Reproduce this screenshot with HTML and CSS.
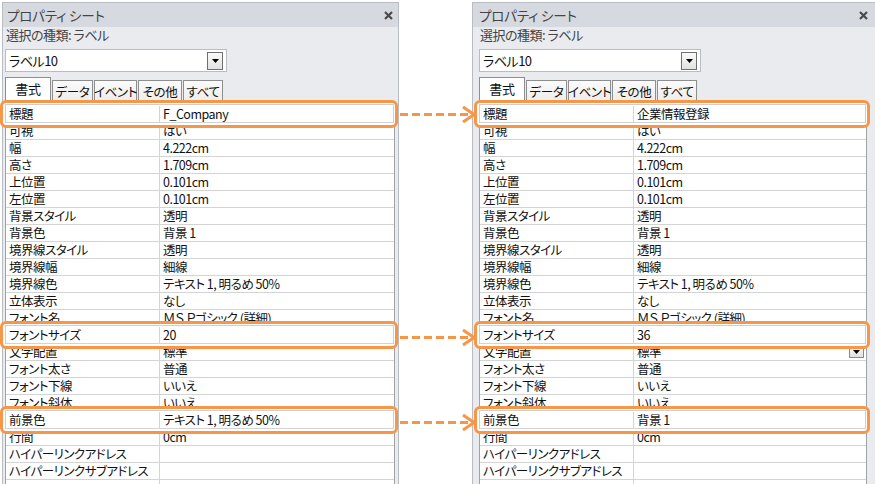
FILE: index.html
```html
<!DOCTYPE html>
<html lang="ja">
<head>
<meta charset="utf-8">
<title>プロパティ シート</title>
<link rel="stylesheet" href="styles.css">
</head>
<body>
<div class="stage">
  <section class="panel panel-left">
    <div class="titlebar"><span class="title">プロパティ シート</span>
      <svg class="close" width="9" height="9" viewBox="0 0 9 9"><path d="M1 1L8 8M8 1L1 8" stroke="#4a4a4a" stroke-width="2.2"/></svg>
    </div>
    <div class="kind">選択の種類: ラベル</div>
    <div class="combo"><span class="combo-text">ラベル10</span><span class="drop"><svg width="7" height="4" viewBox="0 0 7 4"><path d="M0 0H7L3.5 4Z" fill="#000"/></svg></span></div>
    <div class="tabs">
      <div class="tab active w1">書式</div>
      <div class="tab w2">データ</div>
      <div class="tab w3">イベント</div>
      <div class="tab w4">その他</div>
      <div class="tab w5">すべて</div>
    </div>
    <div class="grid">
      <div class="row hl"><div class="name">標題</div><div class="val">F_Company</div></div>
      <div class="row"><div class="name">可視</div><div class="val">はい</div></div>
      <div class="row"><div class="name">幅</div><div class="val">4.222cm</div></div>
      <div class="row"><div class="name">高さ</div><div class="val">1.709cm</div></div>
      <div class="row"><div class="name">上位置</div><div class="val">0.101cm</div></div>
      <div class="row"><div class="name">左位置</div><div class="val">0.101cm</div></div>
      <div class="row"><div class="name">背景スタイル</div><div class="val">透明</div></div>
      <div class="row"><div class="name">背景色</div><div class="val">背景 1</div></div>
      <div class="row"><div class="name">境界線スタイル</div><div class="val">透明</div></div>
      <div class="row"><div class="name">境界線幅</div><div class="val">細線</div></div>
      <div class="row"><div class="name">境界線色</div><div class="val">テキスト 1, 明るめ 50%</div></div>
      <div class="row"><div class="name">立体表示</div><div class="val">なし</div></div>
      <div class="row"><div class="name">フォント名</div><div class="val">ＭＳ Ｐゴシック (詳細)</div></div>
      <div class="row hl"><div class="name">フォントサイズ</div><div class="val">20</div></div>
      <div class="row"><div class="name">文字配置</div><div class="val">標準</div></div>
      <div class="row"><div class="name">フォント太さ</div><div class="val">普通</div></div>
      <div class="row"><div class="name">フォント下線</div><div class="val">いいえ</div></div>
      <div class="row"><div class="name">フォント斜体</div><div class="val">いいえ</div></div>
      <div class="row hl"><div class="name">前景色</div><div class="val">テキスト 1, 明るめ 50%</div></div>
      <div class="row"><div class="name">行間</div><div class="val">0cm</div></div>
      <div class="row"><div class="name">ハイパーリンクアドレス</div><div class="val"></div></div>
      <div class="row"><div class="name">ハイパーリンクサブアドレス</div><div class="val"></div></div>
      <div class="row"><div class="name"></div><div class="val"></div></div>
    </div>
  </section>

  <section class="panel panel-right">
    <div class="titlebar"><span class="title">プロパティ シート</span>
      <svg class="close" width="9" height="9" viewBox="0 0 9 9"><path d="M1 1L8 8M8 1L1 8" stroke="#4a4a4a" stroke-width="2.2"/></svg>
    </div>
    <div class="kind">選択の種類: ラベル</div>
    <div class="combo"><span class="combo-text">ラベル10</span><span class="drop"><svg width="7" height="4" viewBox="0 0 7 4"><path d="M0 0H7L3.5 4Z" fill="#000"/></svg></span></div>
    <div class="tabs">
      <div class="tab active w1">書式</div>
      <div class="tab w2">データ</div>
      <div class="tab w3">イベント</div>
      <div class="tab w4">その他</div>
      <div class="tab w5">すべて</div>
    </div>
    <div class="grid">
      <div class="row hl"><div class="name">標題</div><div class="val">企業情報登録</div></div>
      <div class="row"><div class="name">可視</div><div class="val">はい</div></div>
      <div class="row"><div class="name">幅</div><div class="val">4.222cm</div></div>
      <div class="row"><div class="name">高さ</div><div class="val">1.709cm</div></div>
      <div class="row"><div class="name">上位置</div><div class="val">0.101cm</div></div>
      <div class="row"><div class="name">左位置</div><div class="val">0.101cm</div></div>
      <div class="row"><div class="name">背景スタイル</div><div class="val">透明</div></div>
      <div class="row"><div class="name">背景色</div><div class="val">背景 1</div></div>
      <div class="row"><div class="name">境界線スタイル</div><div class="val">透明</div></div>
      <div class="row"><div class="name">境界線幅</div><div class="val">細線</div></div>
      <div class="row"><div class="name">境界線色</div><div class="val">テキスト 1, 明るめ 50%</div></div>
      <div class="row"><div class="name">立体表示</div><div class="val">なし</div></div>
      <div class="row"><div class="name">フォント名</div><div class="val">ＭＳ Ｐゴシック (詳細)</div></div>
      <div class="row hl"><div class="name">フォントサイズ</div><div class="val">36</div></div>
      <div class="row"><div class="name">文字配置</div><div class="val">標準<span class="cell-drop"><svg width="7" height="4" viewBox="0 0 7 4"><path d="M0 0H7L3.5 4Z" fill="#000"/></svg></span></div></div>
      <div class="row"><div class="name">フォント太さ</div><div class="val">普通</div></div>
      <div class="row"><div class="name">フォント下線</div><div class="val">いいえ</div></div>
      <div class="row"><div class="name">フォント斜体</div><div class="val">いいえ</div></div>
      <div class="row hl"><div class="name">前景色</div><div class="val">背景 1</div></div>
      <div class="row"><div class="name">行間</div><div class="val">0cm</div></div>
      <div class="row"><div class="name">ハイパーリンクアドレス</div><div class="val"></div></div>
      <div class="row"><div class="name">ハイパーリンクサブアドレス</div><div class="val"></div></div>
      <div class="row"><div class="name"></div><div class="val"></div></div>
    </div>
  </section>

  <svg class="arrows" width="80" height="484" viewBox="396 0 80 484">
    <g fill="none" stroke="#f79646" stroke-width="3">
      <path d="M400 114.5H470" stroke-dasharray="8 4"/>
      <path d="M463 107L474 114.5L463 122"/>
      <path d="M400 337.5H470" stroke-dasharray="8 4"/>
      <path d="M463 330L474 337.5L463 345"/>
      <path d="M400 422.5H470" stroke-dasharray="8 4"/>
      <path d="M463 415L474 422.5L463 430"/>
    </g>
  </svg>
</div>
</body>
</html>
```

FILE: styles.css
```css
* { box-sizing: border-box; }
html, body { margin: 0; padding: 0; }
body {
  width: 875px;
  height: 484px;
  overflow: hidden;
  background: #fff;
  font-family: "Noto Sans CJK JP", "Noto Sans", sans-serif;
  font-feature-settings: "palt";
  font-size: 12.5px;
  letter-spacing: -0.5px;
  color: #111;
}
.stage {
  position: relative;
  display: flex;
  align-items: flex-start;
  height: 484px;
  overflow: hidden;
}
.panel {
  margin-top: 2px;
  height: 520px;
  background: #e9ebef;
  border: 1px solid #b8bdc4;
  border-bottom: none;
  display: flex;
  flex-direction: column;
  flex-shrink: 0;
}
.panel > * { flex-shrink: 0; }
.panel-left {
  margin-left: 2px;
  width: 397px;
  padding: 0 3px 0 2px;
}
.panel-right {
  margin-left: 73px;
  width: 404px;
  padding: 0 8px 0 6px;
}
.titlebar {
  height: 24px;
  background: #d6dae0;
  display: flex;
  align-items: center;
  justify-content: space-between;
  line-height: 16px;
}
.panel-left .titlebar { margin: 0 -3px 0 -2px; padding-left: 4px; padding-right: 5px; }
.panel-right .titlebar { margin: 0 -8px 0 -6px; padding-left: 6px; padding-right: 7px; }
.title { color: #444; font-size: 13.5px; letter-spacing: -0.2px; }
.close { display: block; }
.kind {
  height: 13px;
  line-height: 13px;
  color: #444;
  padding-left: 1px;
  margin-top: 1px;
  font-size: 13px;
}
.combo {
  margin-top: 8px;
  height: 23px;
  width: 222px;
  background: #fff;
  border: 1px solid #b9bcc2;
  display: flex;
  align-items: center;
  justify-content: space-between;
  padding: 0 3px 0 3px;
  font-size: 13px;
}
.combo-text { color: #111; }
.drop {
  width: 16px;
  height: 18px;
  border: 1px solid #6f6f6f;
  background: linear-gradient(#fafafa, #e2e2e2);
  display: flex;
  align-items: center;
  justify-content: center;
}
.drop svg, .cell-drop svg { display: block; }
.tabs {
  margin-top: 5px;
  height: 25px;
  display: flex;
  align-items: flex-end;
  gap: 1px;
}
.tab {
  height: 22px;
  border: 1px solid #8e8e8e;
  border-bottom: none;
  background: linear-gradient(#fbfbfb, #ececec);
  display: flex;
  align-items: center;
  justify-content: center;
  color: #111;
  font-size: 12.5px;
  white-space: nowrap;
  letter-spacing: -0.3px;
}
.tab.active {
  height: 25px;
  background: #fff;
  padding-bottom: 3px;
  position: relative;
  z-index: 1;
  font-size: 13px;
}
.w1 { width: 46px; }
.w2 { width: 41px; }
.w3 { width: 43px; }
.w4 { width: 44px; }
.w5 { width: 40px; }
.grid {
  flex: 1;
  background: #fff;
  border: 1px solid #9fa3a8;
  border-bottom: none;
  padding-top: 3px;
}
.row {
  height: 17px;
  display: flex;
  line-height: 16px;
}
.name {
  width: 154px;
  flex-shrink: 0;
  border-right: 1px solid #d4d4d4;
  border-bottom: 1px solid #d4d4d4;
  padding-left: 3px;
  white-space: nowrap;
}
.val {
  flex: 1;
  border-bottom: 1px solid #d4d4d4;
  padding-left: 3px;
  white-space: nowrap;
  display: flex;
  align-items: center;
}
.cell-drop {
  margin-left: auto;
  margin-right: 2px;
  width: 15px;
  height: 12px;
  border: 1px solid #8a8a8a;
  background: linear-gradient(#fafafa, #e0e0e0);
  display: flex;
  align-items: center;
  justify-content: center;
}
.row.hl {
  position: relative;
  z-index: 2;
}
.row.hl::before {
  content: "";
  position: absolute;
  top: -6px;
  bottom: -5px;
  left: -6px;
  right: -4px;
  border: 3px solid #f79646;
  border-radius: 6px;
  background: #fff;
  z-index: -1;
}
.row.hl::after {
  content: "";
  position: absolute;
  top: -2px;
  bottom: 0;
  left: -1px;
  right: 0;
  border: 1px solid #cfcfcf;
  z-index: -1;
}
.arrows {
  position: absolute;
  left: 396px;
  top: 0;
}
```
